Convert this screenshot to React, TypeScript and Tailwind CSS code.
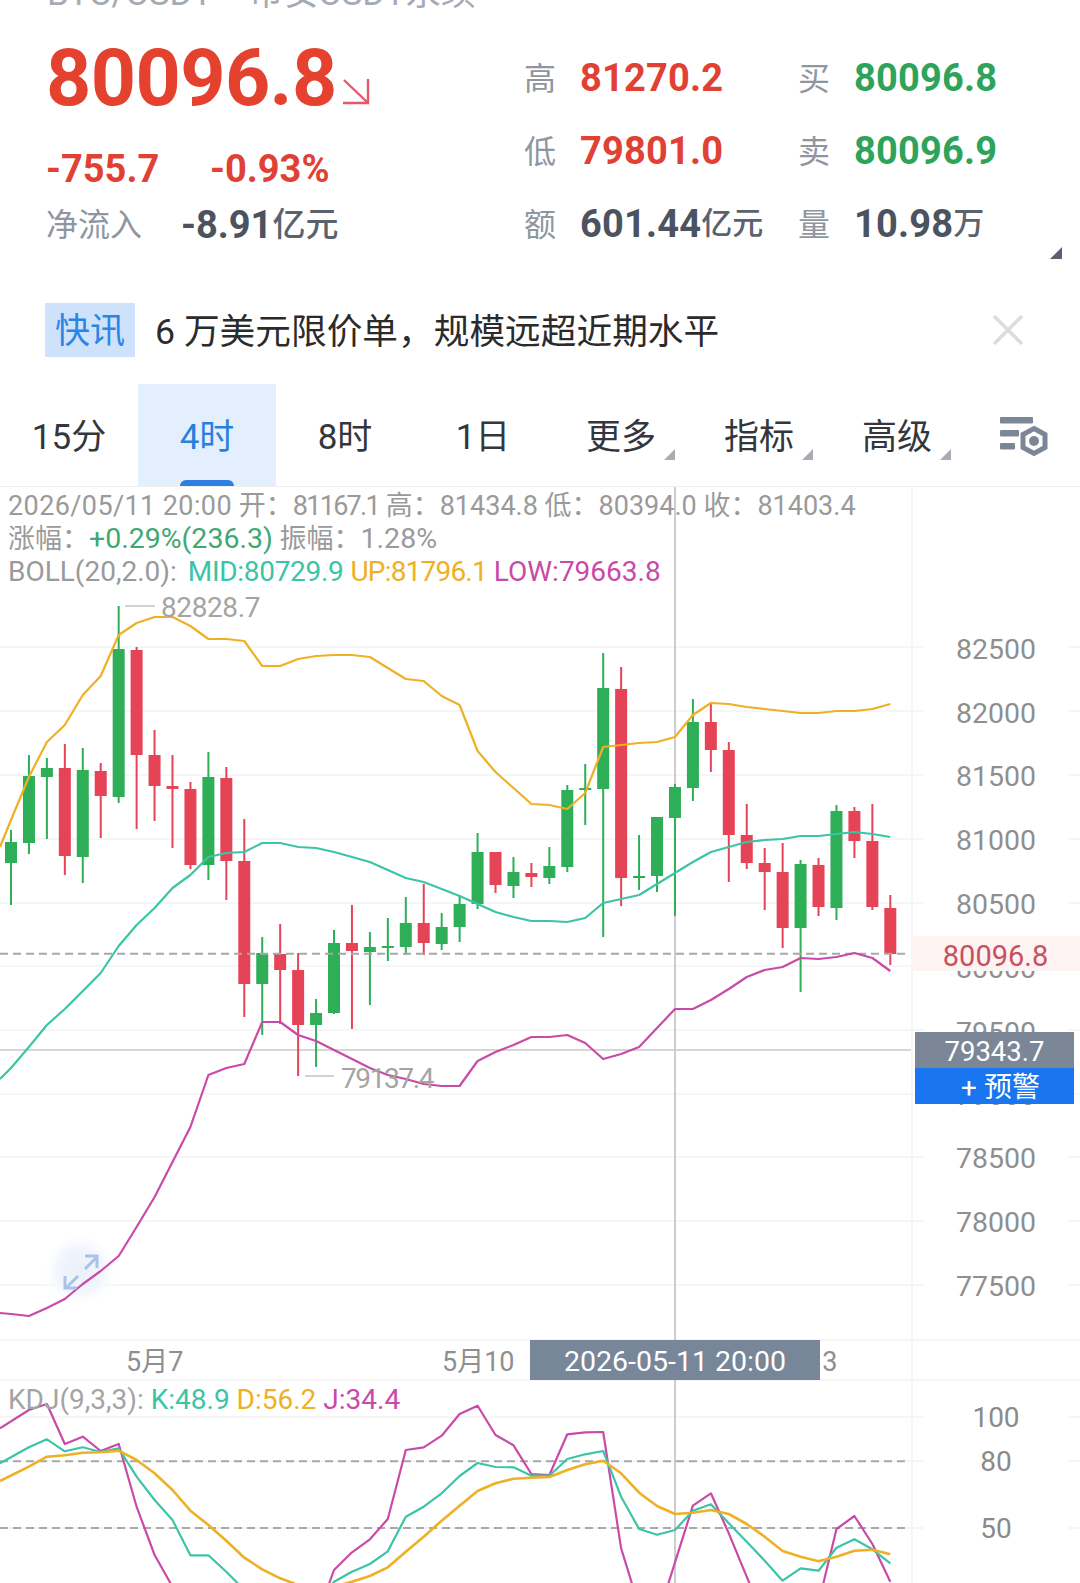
import React from "react";

type C = [number, number, number, number, "g" | "r"];
const candles: C[] = [
  [830,842,863,905,"g"],[755,776,843,854,"g"],[758,768,777,839,"g"],[744,768,856,875,"r"],[748,770,857,883,"g"],
  [763,771,796,838,"r"],[606,649,797,803,"g"],[647,650,755,829,"r"],[730,755,786,821,"r"],[755,786,789,848,"r"],
  [782,789,865,869,"r"],[752,777,865,880,"g"],[767,778,861,900,"r"],[819,861,984,1017,"r"],[937,953,984,1035,"g"],
  [924,954,970,1024,"r"],[953,970,1025,1076,"r"],[999,1013,1025,1067,"g"],[930,943,1013,1014,"g"],[905,943,951,1029,"r"],
  [932,947,952,1005,"g"],[918,946,947,961,"g"],[897,923,947,955,"g"],[884,923,943,955,"r"],[913,927,944,950,"g"],
  [895,904,927,942,"g"],[833,852,904,909,"g"],[852,852,885,893,"r"],[857,872,886,898,"g"],[863,873,877,887,"r"],
  [847,866,878,884,"g"],[785,790,867,872,"g"],[764,788,790,825,"g"],[653,688,789,937,"g"],[667,689,878,906,"r"],
  [835,876,877,890,"g"],[817,817,876,892,"g"],[784,787,818,916,"g"],[699,722,788,801,"g"],[703,722,750,772,"r"],
  [742,750,835,882,"r"],[804,835,863,869,"r"],[848,863,872,910,"r"],[843,872,928,948,"r"],[860,864,928,992,"g"],
  [858,865,907,916,"r"],[805,811,908,920,"g"],[807,811,841,858,"r"],[804,841,907,910,"r"],[895,908,954,965,"r"],
];
const cx = (i: number) => 11 + 17.945 * i;
const up = [820,777,742,725,695,676,635,623,617,617,626,639,639,641,666,666,659,656,655,655,657,668,679,681,696,705,751,772,788,804,805,809,793,747,745,743,742,737,715,703,704,707,709,711,713,713,711,711,709,704];
const mid = [1068,1047,1025,1009,991,973,946,925,908,888,875,857,853,852,843,843,847,848,852,857,862,870,878,882,889,896,904,912,917,921,921,922,918,903,899,895,884,873,862,852,847,842,840,839,836,836,834,832,834,837];
const low = [1314,1316,1308,1299,1284,1271,1256,1227,1197,1162,1127,1075,1068,1064,1022,1022,1035,1041,1050,1059,1068,1075,1079,1084,1086,1086,1061,1052,1045,1037,1037,1035,1043,1059,1054,1047,1028,1009,1009,1000,989,977,970,967,958,959,957,953,958,971];
const kk = [382,358,394,382,396,385,470,540,600,706,706,755,810,860,900,920,860,785,755,732,694,590,560,520,468,429,441,442,467,467,417,403,393,530,627,644,630,572,553,610,665,722,782,745,752,683,658,688,730];
const dd = [440,410,406,398,397,392,420,460,510,572,615,662,713,748,775,795,810,800,785,768,742,695,650,602,557,513,490,476,473,471,450,433,422,460,518,558,582,578,570,582,612,650,693,710,724,710,692,689,703];
const jj = [270,252,372,350,393,372,560,705,800,950,1050,1100,1100,1100,1100,1000,900,750,697,658,597,390,382,347,282,257,345,376,462,465,343,337,336,685,860,900,727,557,520,640,770,900,1000,1000,850,627,588,672,785];

const pts = (a: number[], start?: number) =>
  (start !== undefined ? `0,${start} ` : "") + a.map((y, i) => `${cx(i).toFixed(1)},${y}`).join(" ");
const kPts = (a: number[], start: number, offset = 1) =>
  `0,${1320 + start / 3} ` + a.map((p, i) => `${cx(i + offset).toFixed(1)},${(1320 + p / 3).toFixed(1)}`).join(" ");

const grid = [647, 711, 775, 839, 903, 966, 1030, 1094, 1157, 1221, 1285];
const axis: [string, number][] = [["82500",650],["82000",714],["81500",777],["81000",841],["80500",905],["80000",969],["79500",1033],["79000",1096],["78500",1159],["78000",1223],["77500",1287]];

const Tri = ({ c = "#a9adb3", s = 11 }: { c?: string; s?: number }) => (
  <svg width={s} height={s} viewBox="0 0 11 11" className="block"><polygon points="11,0 11,11 0,11" fill={c} /></svg>
);

const Stat = ({ label, value, tone, unit }: { label: string; value: string; tone: string; unit?: string }) => (
  <div className="flex items-center h-[73px]">
    <span className="w-[56px] text-[32px] text-[#8f96a0]">{label}</span>
    <span className={`text-[38px] font-bold tracking-[0.2px] ${tone}`}>{value}</span>
    {unit && <span className="text-[31px] font-medium text-[#5a626e]">{unit}</span>}
  </div>
);

const Tab = ({ t, active, tri }: { t: string; active?: boolean; tri?: boolean }) => (
  <div className={`relative w-[138px] h-full flex items-center justify-center pt-[6px] ${active ? "bg-[#e3effc] text-[#2a7fde]" : "text-[#33373d]"}`}>
    <span className="relative text-[35px]">
      {t}
      {tri && <span className="absolute -right-[19px] bottom-[4px]"><Tri /></span>}
    </span>
    {active && <div className="absolute bottom-0 left-[42px] w-[54px] h-[6px] rounded-t-[6px] bg-[#2f7fe0]" />}
  </div>
);

export default function App() {
  return (
    <div className="w-[1080px] h-[1583px] overflow-hidden bg-white flex flex-col font-['Roboto','Noto_Sans_CJK_SC',sans-serif]">
      {/* cut-off symbol line */}
      <div className="h-[9px] overflow-hidden flex items-end gap-[36px] pl-[47px] shrink-0 text-[35px] leading-[40px] text-[#a5abb4] whitespace-nowrap">
        <span className="-mb-[5px]">BTC/USDT</span>
        <span className="-mb-[5px]">币安USDT永续</span>
      </div>

      {/* quote panel */}
      <div className="relative h-[276px] shrink-0 flex">
        <div className="w-[524px] pl-[46px] pt-[27px] shrink-0">
          <div className="flex items-end h-[84px]">
            <span className="text-[79px] leading-[84px] font-bold text-[#e5412f] tracking-[-0.6px]">80096.8</span>
            <svg width="28" height="28" viewBox="0 0 28 28" className="ml-[5px] mb-[15px]" fill="none" stroke="#e8566e" strokeWidth="2.4">
              <path d="M2 3 L26 26 M26 2 V26 H1" />
            </svg>
          </div>
          <div className="flex items-center h-[50px] mt-[24px] text-[#e04134] text-[38px] font-bold">
            <span className="w-[164px]">-755.7</span>
            <span className="text-[38px]">-0.93%</span>
          </div>
          <div className="flex items-center h-[50px] mt-[6px]">
            <span className="w-[135px] text-[32px] text-[#8f96a0]">净流入</span>
            <span className="text-[38px] font-bold text-[#4b5260]">-8.91</span>
            <span className="text-[33px] font-medium text-[#5a626e]">亿元</span>
          </div>
        </div>
        <div className="grid grid-cols-[274px_auto] content-start pt-[33px] h-full">
          <Stat label="高" value="81270.2" tone="text-[#e04134]" />
          <Stat label="买" value="80096.8" tone="text-[#2ea35a]" />
          <Stat label="低" value="79801.0" tone="text-[#e04134]" />
          <Stat label="卖" value="80096.9" tone="text-[#2ea35a]" />
          <Stat label="额" value="601.44" unit="亿元" tone="text-[#4b5260]" />
          <Stat label="量" value="10.98" unit="万" tone="text-[#4b5260]" />
        </div>
        <div className="absolute left-[1050px] top-[238px]"><Tri c="#5a6270" s={12} /></div>
      </div>

      {/* news */}
      <div className="h-[90px] shrink-0 flex items-center pl-[45px] pr-[57px]">
        <div className="w-[90px] h-[54px] pt-[4px] bg-[#cfe2fb] flex items-center justify-center text-[35px] text-[#2a86e5]">快讯</div>
        <div className="ml-[20px] flex-1 pt-[6px] text-[35.7px] text-[#2b2b2b]">6 万美元限价单，规模远超近期水平</div>
        <svg width="30" height="30" viewBox="0 0 30 30" stroke="#dcdcdc" strokeWidth="3.5" fill="none"><path d="M1 1 L29 29 M29 1 L1 29" /></svg>
      </div>

      {/* tabs */}
      <div className="h-[103px] mt-[9px] shrink-0 flex border-b border-[#efefef]">
        <Tab t="15分" />
        <Tab t="4时" active />
        <Tab t="8时" />
        <Tab t="1日" />
        <Tab t="更多" tri />
        <Tab t="指标" tri />
        <Tab t="高级" tri />
        <div className="flex-1 flex items-start justify-center pt-[33px]">
          <svg width="52" height="46" viewBox="0 0 52 46" fill="#7b8797">
            <rect x="3" y="0" width="33" height="6.5" rx="1" />
            <rect x="3" y="13" width="19" height="6.5" rx="1" />
            <rect x="3" y="26" width="15" height="6.5" rx="1" />
            <polygon points="37,11.5 48,17.5 48,30.5 37,36.5 26,30.5 26,17.5" fill="none" stroke="#7b8797" strokeWidth="5" />
            <circle cx="37" cy="24" r="5" />
          </svg>
        </div>
      </div>

      {/* chart */}
      <div className="relative flex-1 flex flex-col min-h-0">
        <svg className="absolute left-0 top-0" width="1080" height="1096" viewBox="0 487 1080 1096" fill="none">
          <defs>
            <radialGradient id="glow">
              <stop offset="0%" stopColor="#e9f0fb" />
              <stop offset="60%" stopColor="#f2f6fc" />
              <stop offset="100%" stopColor="#ffffff" stopOpacity="0" />
            </radialGradient>
          </defs>
          {grid.map((y) => (
            <g key={y} stroke="#f3f3f3" strokeWidth="1.5">
              <path d={`M0 ${y} H924`} />
              <path d={`M1068 ${y} H1080`} />
            </g>
          ))}
          <g stroke="#f3f3f3" strokeWidth="1.5">
            <path d="M912 487 V1583" />
            <path d="M0 1340 H1080 M0 1380 H1080" />
            <path d="M0 1417 H924 M1068 1417 H1080 M0 1461 H924 M1068 1461 H1080 M0 1528 H924 M1068 1528 H1080" />
          </g>
          <path d="M675 487 V1583" stroke="#bdbdbd" strokeWidth="1.5" />
          <path d="M0 1050 H911" stroke="#c9c9c9" strokeWidth="1.5" />
          {candles.map(([h, t, b, l, col], i) => {
            const x = cx(i);
            const f = col === "g" ? "#2fae58" : "#e54456";
            return (
              <g key={i}>
                <rect x={x - 1} y={h} width="2" height={l - h} fill={f} />
                <rect x={x - 6} y={t} width="12" height={Math.max(b - t, 2)} fill={f} />
              </g>
            );
          })}
          <path d="M0 953.7 H910" stroke="#a8a8a8" strokeWidth="2" strokeDasharray="8 5" />
          <polyline points={pts(up, 847)} stroke="#eeb024" strokeWidth="2.2" strokeLinejoin="round" />
          <polyline points={pts(mid, 1079)} stroke="#3cc4a6" strokeWidth="2.2" strokeLinejoin="round" />
          <path d="M125 606 H155 M305 1076 H334" stroke="#c4c4c4" strokeWidth="1.5" />
          {/* expand button */}
          <circle cx="80" cy="1270" r="38" fill="url(#glow)" />
          <polyline points={pts(low, 1313)} stroke="#c94aa8" strokeWidth="2.2" strokeLinejoin="round" />
          <path d="M85 1269 L97 1257 M85 1256 H97 V1268 M78 1276 L66 1288 M65 1276 V1288 H77" stroke="#a9c3e8" strokeWidth="3" />
          {/* KDJ */}
          <path d="M0 1461.3 H910 M0 1528 H910" stroke="#a8a8a8" strokeWidth="2" strokeDasharray="8 5" />
          <polyline points={kPts(jj, 325)} stroke="#c94aa8" strokeWidth="2.2" strokeLinejoin="round" />
          <polyline points={kPts(kk, 430)} stroke="#3cc4a6" strokeWidth="2.2" strokeLinejoin="round" />
          <polyline points={kPts(dd, 483)} stroke="#eeb024" strokeWidth="2.6" strokeLinejoin="round" />
        </svg>

        {/* main pane */}
        <div className="relative h-[853px] shrink-0 overflow-hidden">
          <div className="relative pl-[8px] text-[27px] leading-[33px] text-[#9a9a9a] whitespace-nowrap pt-[3px]">
            <div>
              <span className="tracking-[0.4px]">2026/05/11 20:00</span> 开：<span className="tracking-[-1.7px]">81167.1</span> 高：81434.8 低：80394.0 收：81403.4
            </div>
            <div className="-mt-[1px]">涨幅：<span className="text-[28.5px] text-[#3fa873]">+0.29%(236.3)</span> <span>振幅：</span><span className="text-[28.5px]">1.28%</span></div>
            <div className="text-[28px] -mt-[1px]">
              BOLL(20,2.0): <span className="ml-[4px] tracking-[-0.3px] text-[#3cc4a6]">MID:80729.9</span> <span className="tracking-[-0.8px] text-[#eeb024]">UP:81796.1</span> <span className="text-[#c94aa8]">LOW:79663.8</span>
            </div>
          </div>
          <span className="absolute left-[161px] top-[105px] text-[28px] leading-[32px] tracking-[-0.4px] text-[#a4a4a4]">82828.7</span>
          <span className="absolute left-[341px] top-[576px] text-[28px] leading-[32px] tracking-[-1.4px] text-[#a4a4a4]">79137.4</span>
          {axis.map(([t, y]) => (
            <span key={t} className="absolute left-[916px] w-[160px] text-center text-[28.5px] leading-[32px] text-[#8f8f8f]" style={{ top: y - 487 - 16 }}>{t}</span>
          ))}
          <div className="absolute left-[911px] right-0 top-[449px] h-[35px] pt-[6px] bg-[#fdf3f2] flex items-center justify-center text-[29px] text-[#c9505e]">80096.8</div>
          <div className="absolute left-[915px] top-[545px] w-[159px] flex flex-col text-white">
            <div className="h-[36px] pt-[3px] bg-[#7b8797] flex items-center justify-center text-[27.5px]">79343.7</div>
            <div className="h-[36px] pt-[3px] pl-[12px] bg-[#1a76f0] flex items-center justify-center text-[28px]">+ 预警</div>
          </div>
        </div>

        {/* x axis */}
        <div className="relative h-[40px] shrink-0 text-[27px] leading-[44px] text-[#8f8f8f]">
          <span className="absolute left-[126px]">5月7</span>
          <span className="absolute left-[442px]">5月10</span>
          <span className="absolute left-[765px]">5月13</span>
          <div className="absolute left-[530px] top-0 w-[290px] h-[40px] pt-[3px] bg-[#78869a] text-white text-[28.5px] leading-[36px] flex items-center justify-center">2026-05-11 20:00</div>
        </div>

        {/* KDJ pane */}
        <div className="relative flex-1 min-h-0">
          <div className="relative pl-[8px] pt-[3px] text-[28px] leading-[33px] text-[#a4a4a4] whitespace-nowrap">
            KDJ(9,3,3): <span className="text-[#3cc4a6]">K:48.9</span> <span className="text-[#eeb024]">D:56.2</span> <span className="text-[#c94aa8]">J:34.4</span>
          </div>
          {([["100",1418],["80",1462],["50",1529]] as [string, number][]).map(([t, y]) => (
            <span key={t} className="absolute left-[916px] w-[160px] text-center text-[28px] leading-[32px] text-[#8a8a8a]" style={{ top: y - 1380 - 16 }}>{t}</span>
          ))}
        </div>
      </div>
    </div>
  );
}
